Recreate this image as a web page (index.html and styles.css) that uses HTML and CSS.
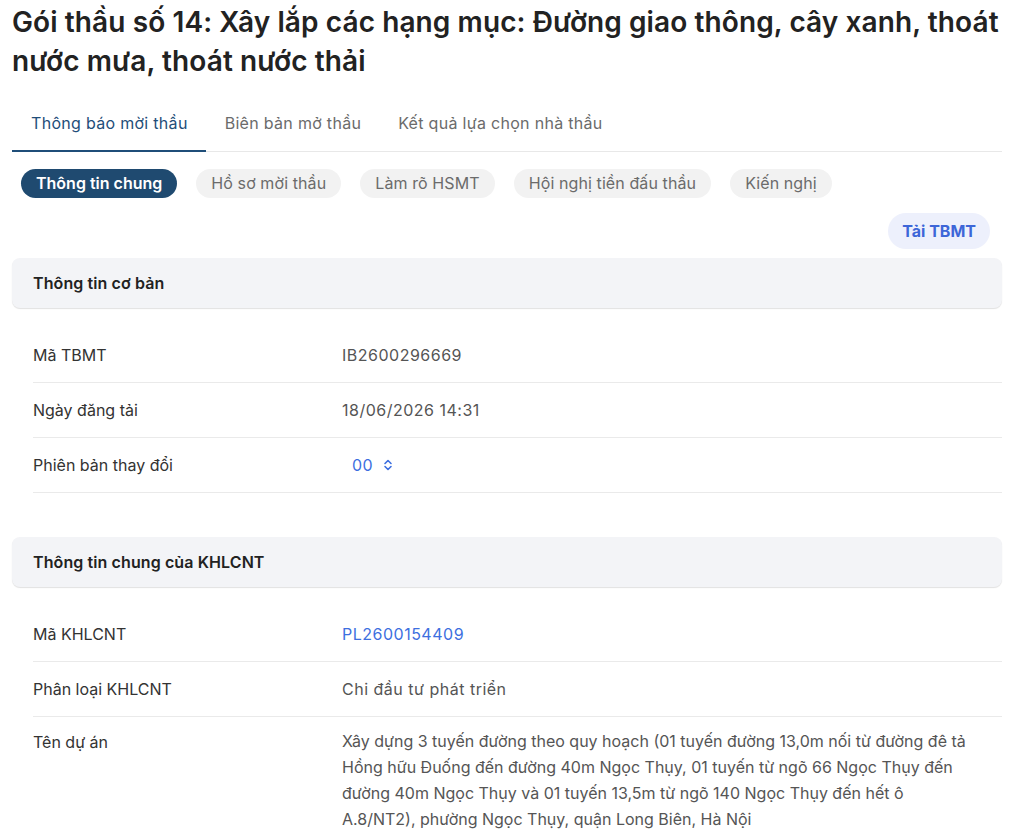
FILE: index.html
```html
<!DOCTYPE html>
<html lang="vi">
<head>
<meta charset="utf-8">
<title>Gói thầu số 14</title>
<link rel="stylesheet" href="styles.css">
</head>
<body>
<div class="page">
  <h1 class="title">Gói thầu số 14: Xây lắp các hạng mục: Đường giao thông, cây xanh, thoát nước mưa, thoát nước thải</h1>

  <nav class="tabs">
    <div class="tab active">Thông báo mời thầu</div>
    <div class="tab">Biên bản mở thầu</div>
    <div class="tab">Kết quả lựa chọn nhà thầu</div>
  </nav>

  <div class="pills">
    <div class="pill active">Thông tin chung</div>
    <div class="pill">Hồ sơ mời thầu</div>
    <div class="pill">Làm rõ HSMT</div>
    <div class="pill">Hội nghị tiền đấu thầu</div>
    <div class="pill">Kiến nghị</div>
  </div>

  <div class="actions">
    <button class="btn-download">Tải TBMT</button>
  </div>

  <section class="section">
    <div class="section-head">Thông tin cơ bản</div>
    <div class="rows">
      <div class="row"><div class="label">Mã TBMT</div><div class="value">IB2600296669</div></div>
      <div class="row"><div class="label">Ngày đăng tải</div><div class="value">18/06/2026 14:31</div></div>
      <div class="row"><div class="label">Phiên bản thay đổi</div><div class="value"><span class="version">00
        <svg class="chev" width="10" height="14" viewBox="0 0 10 14" fill="none" stroke="currentColor" stroke-width="1.6" stroke-linecap="round" stroke-linejoin="round"><path d="M2 5.5 L5 2.5 L8 5.5"/><path d="M2 8.5 L5 11.5 L8 8.5"/></svg></span></div></div>
    </div>
  </section>

  <section class="section">
    <div class="section-head">Thông tin chung của KHLCNT</div>
    <div class="rows">
      <div class="row"><div class="label">Mã KHLCNT</div><div class="value link">PL2600154409</div></div>
      <div class="row"><div class="label">Phân loại KHLCNT</div><div class="value">Chi đầu tư phát triển</div></div>
      <div class="row multi"><div class="label">Tên dự án</div><div class="value">Xây dựng 3 tuyến đường theo quy hoạch (01 tuyến đường 13,0m nối từ đường đê tả Hồng hữu Đuống đến đường 40m Ngọc Thụy, 01 tuyến từ ngõ 66 Ngọc Thụy đến đường 40m Ngọc Thụy và 01 tuyến 13,5m từ ngõ 140 Ngọc Thụy đến hết ô A.8/NT2), phường Ngọc Thụy, quận Long Biên, Hà Nội</div></div>
    </div>
  </section>
</div>
</body>
</html>
```

FILE: styles.css
```css
* { box-sizing: border-box; }
html, body { margin: 0; padding: 0; background: #fff; }
body {
  font-family: Inter, "Noto Sans", "Liberation Sans", sans-serif;
  color: #222;
}
.page {
  width: 990px;
  margin-left: 12px;
  padding-top: 3px;
}
.title {
  margin: 0 -4px 0 0;
  font-size: 28px;
  font-weight: 600;
  line-height: 39px;
  color: #222;
  letter-spacing: 0.1px;
}
.tabs {
  display: flex;
  margin-top: 22px;
  border-bottom: 1px solid #e8e8e8;
}
.tab {
  padding: 0 18px 0 19px;
  height: 49px;
  line-height: 40px;
  font-size: 16px;
  color: #6b6b6b;
  letter-spacing: 0.3px;
  border-bottom: 2px solid transparent;
  margin-bottom: -1px;
}
.tab.active {
  color: #1f4e79;
  border-bottom-color: #1f4e79;
}
.pills {
  display: flex;
  gap: 19px;
  margin-top: 17px;
  padding-left: 9px;
}
.pill {
  height: 29px;
  line-height: 29px;
  padding: 0 15px;
  border-radius: 15px;
  background: #f2f2f2;
  color: #6b6b6b;
  font-size: 16px;
  letter-spacing: 0.1px;
}
.pill.active {
  background: #1f4a70;
  color: #fff;
  font-weight: 600;
  letter-spacing: 0;
}
.actions {
  display: flex;
  justify-content: flex-end;
  margin-top: 15px;
  padding-right: 12px;
}
.btn-download {
  font-family: inherit;
  border: none;
  height: 36px;
  padding: 0 14px;
  border-radius: 18px;
  background: #edf0fc;
  color: #3d66d8;
  font-size: 16px;
  font-weight: 700;
}
.section { margin-top: 9px; }
.section + .section { margin-top: 44px; }
.section-head {
  height: 50px;
  line-height: 50px;
  padding-left: 21px;
  background: #f3f4f7;
  border-radius: 8px;
  box-shadow: 0 1px 1px rgba(0,0,0,0.12);
  font-size: 16px;
  font-weight: 600;
  color: #222;
  letter-spacing: 0.1px;
}
.rows {
  margin-top: 20px;
  margin-left: 21px;
}
.row {
  display: flex;
  height: 55px;
  align-items: center;
  border-bottom: 1px solid #eaeaea;
  font-size: 16px;
}
.row.multi {
  height: auto;
  align-items: flex-start;
  border-bottom: none;
  padding-top: 15px;
}
.label {
  width: 309px;
  flex: none;
  color: #333;
}
.value {
  color: #555;
  letter-spacing: 0.5px;
}
.row.multi .value {
  line-height: 26px;
  width: 630px;
  margin-top: -4px;
  letter-spacing: 0;
}
.value.link { color: #3d6fe0; }
.version {
  display: inline-flex;
  align-items: center;
  gap: 10px;
  margin-left: 10px;
  color: #3d6fe0;
}
.chev { display: block; }
```
